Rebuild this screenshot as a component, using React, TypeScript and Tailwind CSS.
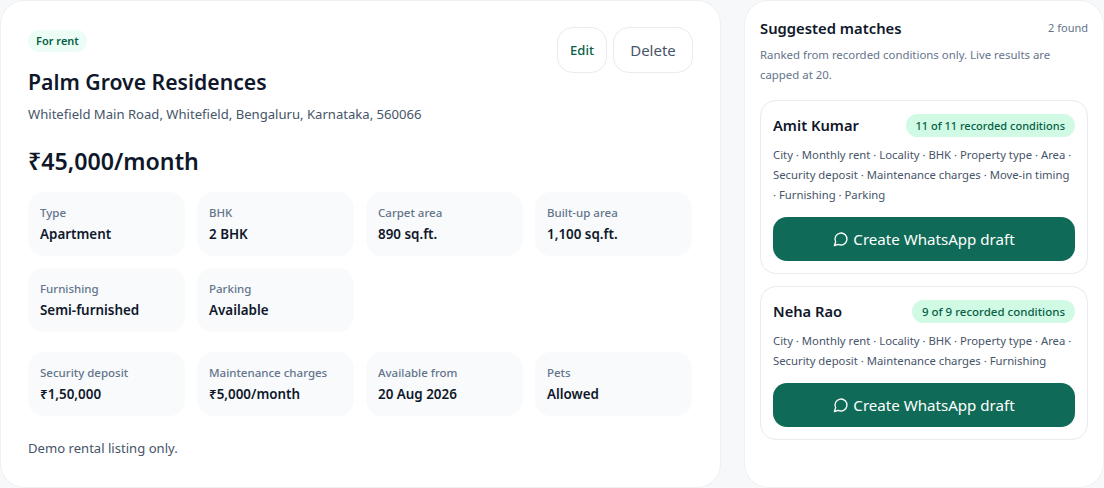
import React from "react";

const specs = [
  { label: "Type", value: "Apartment" },
  { label: "BHK", value: "2 BHK" },
  { label: "Carpet area", value: "890 sq.ft." },
  { label: "Built-up area", value: "1,100 sq.ft." },
  { label: "Furnishing", value: "Semi-furnished" },
  { label: "Parking", value: "Available" },
];

const terms = [
  { label: "Security deposit", value: "₹1,50,000" },
  { label: "Maintenance charges", value: "₹5,000/month" },
  { label: "Available from", value: "20 Aug 2026" },
  { label: "Pets", value: "Allowed" },
];

const matches = [
  {
    name: "Amit Kumar",
    score: "11 of 11 recorded conditions",
    scoreSize: "text-[11px]",
    conditions:
      "City · Monthly rent · Locality · BHK · Property type · Area · Security deposit · Maintenance charges · Move-in timing · Furnishing · Parking",
  },
  {
    name: "Neha Rao",
    score: "9 of 9 recorded conditions",
    scoreSize: "text-[11.5px]",
    conditions:
      "City · Monthly rent · Locality · BHK · Property type · Area · Security deposit · Maintenance charges · Furnishing",
  },
];

const Fact = ({ label, value }: { label: string; value: string }) => (
  <div className="h-16 rounded-2xl bg-[#f8fafc] px-3 pt-3">
    <p className="text-[11.5px] leading-[18px] font-medium text-[#64748b]">{label}</p>
    <p className="mt-0.5 text-[13.4px] leading-5 font-semibold text-[#0f172a]">{value}</p>
  </div>
);

const ChatIcon = () => (
  <svg className="h-4 w-4" fill="none" stroke="currentColor" viewBox="0 0 24 24">
    <path
      strokeLinecap="round"
      strokeLinejoin="round"
      strokeWidth={2}
      d="M7.9 20A9 9 0 1 0 4 16.1L2 22Z"
    />
  </svg>
);

const MatchCard = ({
  name,
  score,
  scoreSize,
  conditions,
}: {
  name: string;
  score: string;
  scoreSize: string;
  conditions: string;
}) => (
  <div className="rounded-2xl border border-[#e8ebef] bg-white px-3 pt-[13px] pb-3">
    <div className="flex items-center justify-between">
      <p className="text-[14.7px] font-semibold text-[#0f172a]">{name}</p>
      <span className={`rounded-full bg-[#d1fae5] px-2.5 py-[2.5px] leading-[18px] font-medium text-[#065f46] ${scoreSize}`}>
        {score}
      </span>
    </div>
    <p className="mt-2 text-[11.3px] leading-5 text-[#475569]">{conditions}</p>
    <button className="mt-3 flex h-11 w-full items-center justify-center gap-1 rounded-[14px] bg-[#0f6b57] text-[15.1px] text-white">
      <ChatIcon />
      Create WhatsApp draft
    </button>
  </div>
);

export default function App() {
  return (
    <div
      className="flex h-[488px] w-[1104px] gap-[23px] overflow-hidden bg-[#f6f8f9]"
      style={{ fontFamily: '"Noto Sans", sans-serif' }}
    >
      <section className="h-[488px] w-[721px] rounded-3xl border border-[#eef1f4] bg-white px-[27px] pt-[26px]">
        <div className="flex items-start justify-between">
          <div>
            <span className="inline-block rounded-full bg-[#ecfdf5] px-2 py-0.5 text-[11px] leading-[18px] font-semibold text-[#065f46]">
              For rent
            </span>
            <h1 className="mt-[14px] text-[21.2px] leading-8 font-semibold text-[#0f172a]">Palm Grove Residences</h1>
            <p className="mt-1.5 text-[13.1px] leading-5 text-[#475569]">
              Whitefield Main Road, Whitefield, Bengaluru, Karnataka, 560066
            </p>
          </div>
          <div className="flex gap-1.5">
            <button className="h-[46px] w-[50px] rounded-2xl border border-[#e8ebef] bg-white pt-0.5 text-[13px] font-medium text-[#065f46]">
              Edit
            </button>
            <button className="h-[46px] w-20 rounded-2xl border border-[#e8ebef] bg-white text-[15px] text-[#475569]">
              Delete
            </button>
          </div>
        </div>
        <p className="mt-[21px] text-[23.2px] leading-8 font-semibold text-[#0f172a]">₹45,000/month</p>
        <div className="mt-[15px] grid w-[664px] grid-cols-4 gap-3">
          {specs.map((spec) => (
            <Fact key={spec.label} {...spec} />
          ))}
        </div>
        <div className="mt-5 grid w-[664px] grid-cols-4 gap-3">
          {terms.map((term) => (
            <Fact key={term.label} {...term} />
          ))}
        </div>
        <p className="mt-[22px] text-[13.1px] leading-5 text-[#475569]">Demo rental listing only.</p>
      </section>

      <aside className="h-[488px] w-[360px] rounded-3xl border border-[#eef1f4] bg-white px-[15px] pt-[17px]">
        <div className="flex items-center justify-between">
          <h2 className="text-[14.8px] leading-5 font-semibold text-[#0f172a]">Suggested matches</h2>
          <span className="text-[11px] text-[#64748b]">2 found</span>
        </div>
        <p className="mt-[7px] pr-8 text-[11.4px] leading-5 text-[#64748b]">
          Ranked from recorded conditions only. Live results are capped at 20.
        </p>
        <div className="mt-[15px] flex flex-col gap-3">
          {matches.map((match) => (
            <MatchCard key={match.name} {...match} />
          ))}
        </div>
      </aside>
    </div>
  );
}
